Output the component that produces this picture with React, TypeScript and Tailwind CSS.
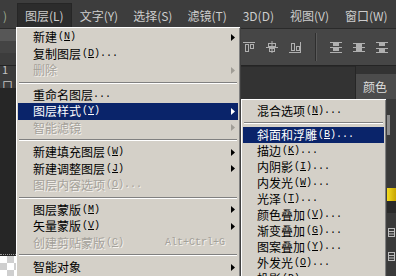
import React from "react";

type Item = {
  sep?: boolean;
  label?: string;
  k?: string;
  dots?: boolean;
  arrow?: boolean;
  disabled?: boolean;
  active?: boolean;
  shortcut?: string;
};

const mainItems: Item[] = [
  { label: "新建", k: "N", arrow: true },
  { label: "复制图层", k: "D", dots: true },
  { label: "删除", arrow: true, disabled: true },
  { sep: true },
  { label: "重命名图层", dots: true },
  { label: "图层样式", k: "Y", arrow: true, active: true },
  { label: "智能滤镜", arrow: true, disabled: true },
  { sep: true },
  { label: "新建填充图层", k: "W", arrow: true },
  { label: "新建调整图层", k: "J", arrow: true },
  { label: "图层内容选项", k: "O", dots: true, disabled: true },
  { sep: true },
  { label: "图层蒙版", k: "M", arrow: true },
  { label: "矢量蒙版", k: "V", arrow: true },
  { label: "创建剪贴蒙版", k: "C", disabled: true, shortcut: "Alt+Ctrl+G" },
  { sep: true },
  { label: "智能对象", arrow: true },
];

const subItems: Item[] = [
  { label: "混合选项", k: "N", dots: true },
  { sep: true },
  { label: "斜面和浮雕", k: "B", dots: true, active: true },
  { label: "描边", k: "K", dots: true },
  { label: "内阴影", k: "I", dots: true },
  { label: "内发光", k: "W", dots: true },
  { label: "光泽", k: "T", dots: true },
  { label: "颜色叠加", k: "V", dots: true },
  { label: "渐变叠加", k: "G", dots: true },
  { label: "图案叠加", k: "Y", dots: true },
  { label: "外发光", k: "O", dots: true },
  { label: "投影", k: "D", dots: true },
];

function Arrow({ color }: { color: string }) {
  return (
    <svg width="4" height="7" viewBox="0 0 4 7" className="shrink-0">
      <path d="M0 0L4 3.5L0 7Z" fill={color} />
    </svg>
  );
}

function Label({ item }: { item: Item }) {
  return (
    <span className="flex items-center">
      <span className="text-[12px] leading-none">{item.label}</span>
      {item.k && (
        <span className="ml-[1px] font-['Liberation_Mono',monospace] text-[10px] leading-none">
          (<span className="underline underline-offset-1">{item.k}</span>)
        </span>
      )}
      {item.dots && (
        <span className="font-['Liberation_Mono',monospace] text-[10px] leading-none">...</span>
      )}
    </span>
  );
}

function MainRow({ item }: { item: Item }) {
  if (item.sep) {
    return (
      <div className="flex h-[8px] items-center px-[1px]">
        <div className="h-[2px] w-full border-t border-b border-t-[#808080] border-b-white" />
      </div>
    );
  }
  const arrowColor = item.active ? "#ffffff" : item.disabled ? "#a09d96" : "#000000";
  return (
    <div
      className={
        item.active
          ? "flex h-[16.5px] items-center justify-between bg-[#0a246a] pl-[15px] pr-[3px] text-white"
          : item.disabled
          ? "flex h-[16.5px] items-center justify-between pl-[15px] pr-[3px] text-[#a4a19a] [text-shadow:1px_1px_0_#f4f2ee]"
          : "flex h-[16.5px] items-center justify-between pl-[15px] pr-[3px] text-black"
      }
    >
      <Label item={item} />
      {item.arrow && <Arrow color={arrowColor} />}
      {item.shortcut && (
        <span className="mr-[10px] font-['Liberation_Mono',monospace] text-[10px] leading-none">
          {item.shortcut}
        </span>
      )}
    </div>
  );
}

function SubRow({ item }: { item: Item }) {
  if (item.sep) {
    return (
      <div className="flex h-[8px] items-center px-[1px]">
        <div className="h-[2px] w-full border-t border-b border-t-[#808080] border-b-white" />
      </div>
    );
  }
  return (
    <div
      className={
        item.active
          ? "flex h-[16px] items-center bg-[#0a246a] pl-[14px] text-white"
          : "flex h-[16px] items-center pl-[14px] text-black"
      }
    >
      <Label item={item} />
    </div>
  );
}

function IconTop() {
  return (
    <svg width="14" height="16" viewBox="0 0 14 16" fill="none" stroke="#b0b0b0">
      <path d="M1 3.5H13" />
      <rect x="3.5" y="5.5" width="3" height="7" />
      <rect x="8.5" y="5.5" width="3" height="4" />
    </svg>
  );
}
function IconMid() {
  return (
    <svg width="14" height="16" viewBox="0 0 14 16" fill="none" stroke="#b0b0b0">
      <path d="M1 8.5H13" />
      <rect x="3.5" y="4.5" width="7" height="3" />
      <rect x="4.5" y="9.5" width="5" height="3" />
      <path d="M7 2V14" />
    </svg>
  );
}
function IconBottom() {
  return (
    <svg width="14" height="16" viewBox="0 0 14 16" fill="none" stroke="#b0b0b0">
      <path d="M1 13.5H13" />
      <rect x="3.5" y="4.5" width="3" height="7" />
      <rect x="8.5" y="7.5" width="3" height="4" />
      <path d="M12.5 3V13" />
    </svg>
  );
}
function IconDist({ v }: { v: number }) {
  const ys = v === 0 ? [3.5, 8.5, 13.5] : v === 1 ? [4.5, 8.5, 12.5] : [3.5, 9.5, 13.5];
  return (
    <svg width="14" height="16" viewBox="0 0 14 16" fill="none" stroke="#b0b0b0">
      {ys.map((y, i) => (
        <path key={i} d={`M1 ${y}H13`} />
      ))}
      <rect x="4.5" y={ys[0] + 1} width="5" height="2" fill="#b0b0b0" />
      <rect x="4.5" y={ys[1] + 1} width="5" height="2" fill="#b0b0b0" />
    </svg>
  );
}

function PanelGlyph() {
  return (
    <svg width="7" height="9" viewBox="0 0 7 9" fill="none" stroke="#bdbdbd">
      <rect x="0.5" y="0.5" width="6" height="8" />
      <path d="M0.5 3.5H6.5M0.5 6H6.5" />
    </svg>
  );
}

export default function App() {
  return (
    <div className="relative h-[276px] w-[396px] overflow-hidden bg-[#262626] font-['Noto_Sans_CJK_SC',sans-serif]">
      {/* Menubar */}
      <div className="flex h-[28px] items-end bg-[#3d3d3d] text-[12px] text-[#cdcdcd]">
        <div className="flex h-[25px] w-[17px] items-center pl-[3px] text-[#9aa890]">)</div>
        <div className="flex h-[25px] items-center border border-b-0 border-[#262626] bg-[#2c2c2c] px-[7px]">图层(L)</div>
        <div className="flex h-[25px] items-center px-[8px]">文字(Y)</div>
        <div className="flex h-[25px] items-center px-[7px]">选择(S)</div>
        <div className="flex h-[25px] items-center px-[8px]">滤镜(T)</div>
        <div className="flex h-[25px] items-center px-[8px]">3D(D)</div>
        <div className="flex h-[25px] items-center px-[8px]">视图(V)</div>
        <div className="flex h-[25px] items-center px-[8px]">窗口(W)</div>
      </div>

      {/* Options bar */}
      <div className="flex h-[38px] items-center border-t border-b border-t-[#2a2a2a] border-b-[#242424] bg-[#464646]">
        <div className="flex w-[16px] flex-col self-stretch">
          <div className="h-[12px] bg-[#575757]" />
          <div className="h-[12px] bg-[#444444]" />
          <div className="flex-1 bg-[#3c3c3c]" />
        </div>
        <div className="w-[226px]" />
        <div className="flex items-center gap-[9px]">
          <IconTop />
          <IconMid />
          <IconBottom />
        </div>
        <div className="ml-[13px] flex h-[28px]">
          <div className="w-[1px] bg-[#2e2e2e]" />
          <div className="w-[1px] bg-[#5a5a5a]" />
        </div>
        <div className="ml-[12px] flex items-center gap-[9px]">
          <IconDist v={0} />
          <IconDist v={1} />
          <IconDist v={2} />
        </div>
      </div>

      {/* Work area */}
      <div className="flex h-[210px]">
        <div className="flex w-[16px] flex-col">
          <div className="flex h-[22px] items-center bg-[#3b3b3b] pl-[2px] text-[11px] text-[#c4c4c4]">1口</div>
          <div className="flex-1 bg-[#262626]" />
          <div className="h-[2px] border-t border-dotted border-[#9a9a9a]" />
          <div className="h-[20px] bg-[conic-gradient(#cfcfcf_25%,#ffffff_0_50%,#cfcfcf_0_75%,#ffffff_0)] bg-[length:14px_14px]" />
        </div>
        <div className="flex w-[339px] flex-col">
          <div className="h-[33px] border-t border-[#2a2a2a] bg-[#333333]" />
          <div className="flex-1 bg-[#262626]" />
        </div>
        <div className="flex w-[41px] flex-col border-l border-[#262626]">
          <div className="flex h-[33px] flex-col bg-[#333333]">
            <div className="h-[8px]" />
            <div className="flex flex-1 items-center bg-[#4c4c4c] pl-[7px] text-[12px] leading-none text-[#dedede]">颜色</div>
          </div>
          <div className="flex flex-1">
            <div className="w-[31px] bg-[#3d3d3d]" />
            <div className="flex w-[9px] flex-col bg-[#3a3a3a]">
              <div className="h-[16px]" />
              <div className="h-[20px] w-[3px] bg-[#8e8e8e]" />
              <div className="h-[53px]" />
              <div className="h-[13px] bg-[linear-gradient(90deg,#f4dc20,#c8a400)]" />
              <div className="h-[12px] bg-[#2a2a2a]" />
              <div className="flex h-[24px] items-end pl-[1px]">
                <PanelGlyph />
              </div>
              <div className="flex h-[24px] items-end pl-[1px]">
                <PanelGlyph />
              </div>
            </div>
          </div>
        </div>
      </div>

      {/* Main dropdown menu */}
      <div className="absolute left-[16px] top-[27px] w-[225px] bg-[#d4d0c8] p-[2px] shadow-[inset_1px_1px_0_#ffffff,inset_-1px_0_0_#808080] border-r border-[#404040]">
        {mainItems.map((it, i) => (
          <MainRow key={i} item={it} />
        ))}
      </div>

      {/* Submenu */}
      <div className="absolute left-[241px] top-[99px] w-[146px] bg-[#d4d0c8] px-[2px] pt-[4px] shadow-[inset_1px_1px_0_#ffffff,inset_-1px_0_0_#808080] border-r border-[#404040]">
        {subItems.map((it, i) => (
          <SubRow key={i} item={it} />
        ))}
      </div>
    </div>
  );
}
